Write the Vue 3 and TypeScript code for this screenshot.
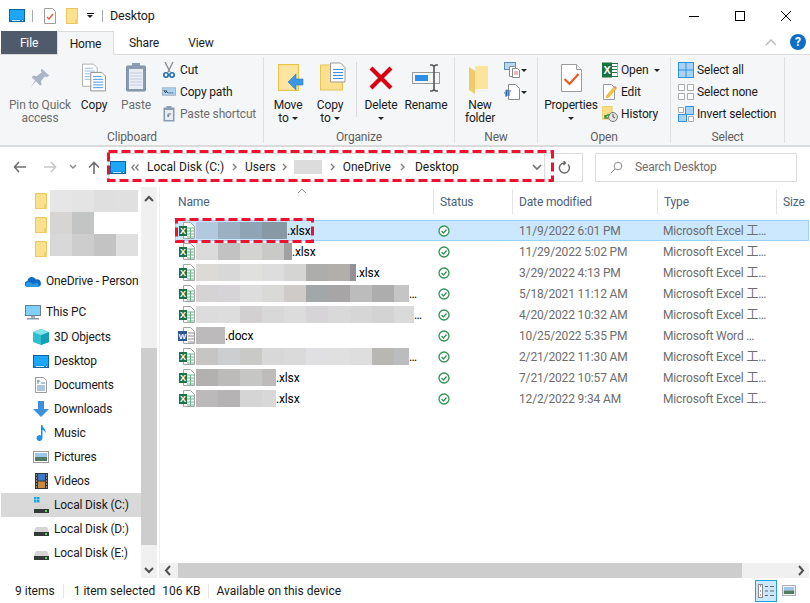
<script setup lang="ts">
type Big = { id: string; lines: string[]; w: number; dis?: boolean; caret?: boolean; caretOwn?: boolean; sz?: number };
type Block = [string, number];
type FileRow = { icon: string; blur: Block[]; ext: string; extra?: string; date: string; type: string; sel?: boolean };

const b = (cs: string[], last?: number): Block[] =>
  cs.map((c, i) => [c, i === cs.length - 1 && last ? last : 22] as Block);

const files: FileRow[] = [
  { icon: 'excel', sel: true, blur: b(['#b1c8de', '#9bb1c3', '#8fa5b5', '#8899a6'], 25), ext: '.xlsx', date: '11/9/2022 6:01 PM', type: 'Microsoft Excel 工…' },
  { icon: 'excel', blur: b(['#dcdbdb', '#c3c2c2', '#d3d3d2', '#c9cac8', '#a1a0a3'], 8), ext: '.xlsx', date: '11/29/2022 5:02 PM', type: 'Microsoft Excel 工…' },
  { icon: 'excel', blur: b(['#dbdad7', '#d9d8d8', '#e0e0df', '#dedddd', '#d5d6d4', '#adadac', '#b1aeab', '#92919a'], 6), ext: '.xlsx', date: '3/29/2022 4:13 PM', type: 'Microsoft Excel 工…' },
  { icon: 'excel', blur: b(['#d5d3d4', '#d6d4d6', '#dddddd', '#d9d9d8', '#cecbc9', '#a4a7a8', '#a8a5a6', '#bcbcbc', '#adadad', '#c5c5c5'], 15), ext: '…', date: '5/18/2021 11:12 AM', type: 'Microsoft Excel 工…' },
  { icon: 'excel', blur: b(['#dddcdc', '#dddddd', '#d2d0d0', '#d9d8d8', '#dcdcdc', '#d6d4d6', '#d9d9da', '#d6d6d6', '#d4d3d3', '#dadada'], 20), ext: '…', date: '4/20/2022 10:32 AM', type: 'Microsoft Excel 工…' },
  { icon: 'word', blur: b(['#bcbaba'], 29), ext: '.docx', date: '10/25/2022 5:35 PM', type: 'Microsoft Word …' },
  { icon: 'excel', blur: b(['#c6c5c3', '#ccced0', '#c9c9c8', '#d8d8d8', '#dadada', '#e0e0e2', '#e0e0e0', '#dedede', '#b9b7b4', '#babcbd'], 15), ext: '…', date: '2/21/2022 11:30 AM', type: 'Microsoft Excel 工…' },
  { icon: 'excel', blur: b(['#b3b1af', '#bcbbba', '#c6c6c5', '#bdbcbb'], 14), ext: '.xlsx', date: '7/21/2022 10:57 AM', type: 'Microsoft Excel 工…' },
  { icon: 'excel', blur: b(['#bbb9b9', '#b5b3b3', '#d6d5d6', '#d9d8d9'], 14), ext: '.xlsx', date: '12/2/2022 9:34 AM', type: 'Microsoft Excel 工…' },
];

const navBlur: string[][] = [
  ['#e6e6e6', '#e4e4e4', '#dfdfdf', '#e0e0e0'],
  ['#d6d5d4', '#c3c4c4', '#ffffff', '#ffffff'],
  ['#d9d8d8', '#cdcdcd', '#c4c3c3', '#dfdfdf'],
];

const pc = [
  { icon: 'cube', label: '3D Objects' },
  { icon: 'monitor', label: 'Desktop' },
  { icon: 'docs', label: 'Documents' },
  { icon: 'down', label: 'Downloads' },
  { icon: 'music', label: 'Music' },
  { icon: 'pics', label: 'Pictures' },
  { icon: 'video', label: 'Videos' },
  { icon: 'diskc', label: 'Local Disk (C:)', sel: true },
  { icon: 'disk', label: 'Local Disk (D:)' },
  { icon: 'disk', label: 'Local Disk (E:)' },
];

const clip: Big[] = [
  { id: 'pin', lines: ['Pin to Quick', 'access'], w: 78, dis: true },
  { id: 'copy', lines: ['Copy'], w: 30 },
  { id: 'paste', lines: ['Paste'], w: 54, dis: true },
];
const org: Big[] = [
  { id: 'moveto', lines: ['Move', 'to'], w: 42, caret: true },
  { id: 'copyto', lines: ['Copy', 'to'], w: 42, caret: true },
];
const org2: Big[] = [
  { id: 'del', lines: ['Delete'], w: 46, caretOwn: true },
  { id: 'rename', lines: ['Rename'], w: 44 },
];
</script>

<template>
  <div class="win">
    <svg class="defs" width="0" height="0" aria-hidden="true">
      <defs>
        <symbol id="monitor" viewBox="0 0 16 13">
          <rect x=".5" y=".5" width="15" height="12" fill="#0f9af0" stroke="#0b63a8" />
          <rect x="1" y="1" width="14" height="9" fill="#1ea7fa" />
          <rect x="3" y="11" width="8" height="1" fill="#cfeaff" />
          <rect x="13" y="11" width="1" height="1" fill="#fff" />
        </symbol>
        <symbol id="tick" viewBox="0 0 12 16">
          <path d="M.5.5h8l3 3v12H.5z" fill="#fff" stroke="#9c9c9c" />
          <path d="M3 9l2 2 4-5" fill="none" stroke="#e8592b" stroke-width="1.4" />
        </symbol>
        <symbol id="folder" viewBox="0 0 12 16">
          <rect x=".5" y=".5" width="11" height="15" fill="#fbe08e" stroke="#e8c661" />
          <rect x="9" y="11" width="3" height="5" fill="#f0cf6f" />
        </symbol>
        <symbol id="pin" viewBox="0 0 24 24">
          <path d="M14 1l9 8-3 2-2-1-5 6 1 4-2 1-5-5-6 7 5-8-4-4 2-2 4 1 6-5-1-2z" fill="#a9b4c6" />
        </symbol>
        <symbol id="copy" viewBox="0 0 26 30">
          <path d="M.5.5h12l4 4v20H.5z" fill="#fff" stroke="#a8a8a8" />
          <path d="M3 5h9M3 8h11M3 11h11M3 14h11M3 17h11" stroke="#8db8ea" />
          <path d="M9.500 9.500h12l4 4v16h-16z" fill="#fff" stroke="#8a8a8a" />
          <path d="M12 14h9M12 17h11M12 20h11M12 23h11M12 26h11" stroke="#3f8de6" />
        </symbol>
        <symbol id="paste" viewBox="0 0 20 29">
          <rect x=".5" y="3" width="19" height="25" rx="1" fill="#8a9bb0" stroke="#7d8da2" />
          <rect x="3" y="6" width="14" height="20" fill="#e9edf5" />
          <path d="M4 10h12M4 13h12M4 16h12M4 19h12M4 22h12" stroke="#c5cee0" />
          <rect x="6" y="0" width="8" height="5" fill="#8d9db2" />
        </symbol>
        <symbol id="cut" viewBox="0 0 12 16">
          <path d="M2 0l5 10M10 0L5 10" stroke="#8d9092" stroke-width="1.4" fill="none" />
          <circle cx="3" cy="13" r="2.2" fill="none" stroke="#1f6fb6" stroke-width="1.6" />
          <circle cx="9" cy="13" r="2.2" fill="none" stroke="#1f6fb6" stroke-width="1.6" />
        </symbol>
        <symbol id="cpath" viewBox="0 0 15 10">
          <rect x=".5" y=".5" width="14" height="8" fill="#a9d3f2" stroke="#a6b2bd" />
          <path d="M2 3l2 3M4 3l2 3M7 6h1M9 6h1M11 6h1" stroke="#223" />
        </symbol>
        <symbol id="pshort" viewBox="0 0 12 16">
          <rect x=".5" y="1.500" width="11" height="14" fill="#8a9bb0" />
          <rect x="2" y="4" width="8" height="10" fill="#e7ebf2" />
          <rect x="3.500" y="0" width="5" height="3" fill="#8d9db2" />
          <path d="M5 11V8h3M6 9l-1 2" stroke="#6b7b8f" fill="none" />
        </symbol>
        <symbol id="moveto" viewBox="0 0 26 28">
          <rect x=".5" y=".5" width="20" height="26" fill="#fce08e" stroke="#e8c44f" />
          <rect x="2.500" y="2" width="16" height="23" fill="#fce59f" />
          <path d="M10 20l8-8v5h7v6h-7v5z" transform="translate(0 -2)" fill="#3b97e6" stroke="#2b78bd" stroke-width=".6" />
        </symbol>
        <symbol id="copyto" viewBox="0 0 26 29">
          <rect x=".5" y="2.500" width="22" height="25" fill="#fce08e" stroke="#e8c44f" />
          <path d="M10.500.5h10l4.500 4.500v14.500H10.500z" fill="#fff" stroke="#9b9b9b" />
          <path d="M13 7h10M13 10h10M13 13h10M13 16h10" stroke="#3f8de6" />
        </symbol>
        <symbol id="del" viewBox="0 0 26 26">
          <path d="M3 3l20 20M23 3L3 23" stroke="#d90012" stroke-width="4.200" />
        </symbol>
        <symbol id="rename" viewBox="0 0 28 28">
          <rect x=".5" y="8.500" width="27" height="11" fill="#f5f6f7" stroke="#9a9a9a" />
          <rect x="3" y="11" width="13" height="6" fill="#2e8fe6" />
          <path d="M18 1h2l2 1 2-1h2M22 2v24M18 27h2l2-1 2 1h2" stroke="#555" stroke-width="1.600" fill="none" />
        </symbol>
        <symbol id="newf" viewBox="0 0 19 28">
          <rect x="6" y="0" width="13" height="23" fill="#fde49b" />
          <path d="M0 1l6 4v23l-6-4z" fill="#f0c96b" />
        </symbol>
        <symbol id="newitem" viewBox="0 0 16 16">
          <rect x=".5" y=".5" width="11" height="7" fill="#b9d7f0" stroke="#5c8db4" />
          <path d="M5.500 4.500h5l2 2v8h-7z" fill="#fff" stroke="#888" />
          <path d="M8.500 6.500h5l2 2v7h-7z" fill="#fff" stroke="#888" />
          <path d="M10 10h4M10 12h4" stroke="#c8747c" />
        </symbol>
        <symbol id="easy" viewBox="0 0 16 16">
          <path d="M4.500.5h7l4 4v11h-11z" fill="#fff" stroke="#888" />
          <path d="M1 7h6M0 9h6M1 11h5" stroke="#1c5fa8" />
          <path d="M3 5.500L2 13" stroke="#1c5fa8" />
        </symbol>
        <symbol id="props" viewBox="0 0 21 28">
          <path d="M.5.5h15l5 5v22H.5z" fill="#fff" stroke="#9c9c9c" />
          <path d="M15.500.5v5h5" fill="#eee" stroke="#9c9c9c" />
          <path d="M3.500 15l5 5 9-10" fill="none" stroke="#f0591e" stroke-width="2.200" />
        </symbol>
        <symbol id="xl" viewBox="0 0 16 15">
          <rect x="6" y="1" width="10" height="13" fill="#fff" stroke="#217346" />
          <path d="M9 4h6M9 7h6M9 10h6" stroke="#217346" />
          <rect x="0" y="0" width="10" height="15" fill="#1b7240" />
          <text x="5" y="11.500" font-size="11" font-weight="700" fill="#fff" text-anchor="middle" font-family="Liberation Sans">X</text>
        </symbol>
        <symbol id="edit" viewBox="0 0 14 16">
          <path d="M.5.5h8l3 3v12H.5z" fill="#fff" stroke="#9c9c9c" />
          <path d="M3 14l1-3 7-8 2 2-7 8z" fill="#f3c13e" stroke="#d99f1f" stroke-width=".5" />
          <path d="M11 3l1-1 2 2-1 1z" fill="#e57b7b" />
        </symbol>
        <symbol id="hist" viewBox="0 0 16 16">
          <rect x="0" y="0" width="10" height="13" fill="#fbdd85" stroke="#e8c661" />
          <circle cx="11" cy="11" r="4.500" fill="#e5e5e5" stroke="#777" />
          <path d="M11 8v3l2 1" stroke="#555" fill="none" />
          <path d="M3 12a4 4 0 0 1 5-3M3 9v3h3" fill="none" stroke="#2f9a36" stroke-width="1.500" />
        </symbol>
        <symbol id="selall" viewBox="0 0 16 16">
          <rect x=".5" y=".5" width="15" height="15" fill="#a9d3f5" stroke="#2e93e6" />
          <path d="M8 0v16M0 8h16" stroke="#2e93e6" />
        </symbol>
        <symbol id="selnone" viewBox="0 0 16 16">
          <path d="M.5.5h6v6h-6zM9.500.5h6v6h-6zM.5 9.500h6v6h-6zM9.500 9.500h6v6h-6z" fill="#fff" stroke="#ababab" />
        </symbol>
        <symbol id="selinv" viewBox="0 0 16 16">
          <path d="M.5 1.500h5v5h-5zM10.500 10.500h5v5h-5z" fill="#fff" stroke="#ababab" />
          <path d="M7.500.5h8v8h-8zM.5 8.500h8v7h-8z" fill="#a9d3f5" stroke="#2e93e6" />
        </symbol>
        <symbol id="excel" viewBox="0 0 17 17">
          <path d="M5.500.5h7l4 4v12h-11z" fill="#fff" stroke="#a5a5a5" />
          <path d="M9 6h7M9 9h7M9 12h7M9 15h7M12.500 6v10" stroke="#69b58a" />
          <rect x="1" y="4" width="8" height="10" fill="#1f7145" />
          <text x="5" y="12" font-size="9" font-weight="700" fill="#fff" text-anchor="middle" font-family="Liberation Sans">X</text>
        </symbol>
        <symbol id="word" viewBox="0 0 17 17">
          <path d="M5.500.5h7l4 4v12h-11z" fill="#fff" stroke="#a5a5a5" />
          <path d="M10 6h6M10 9h6M10 12h6M10 15h6" stroke="#8a8a8a" />
          <rect x="0" y="4" width="9" height="10" fill="#2b579a" />
          <text x="4.500" y="12" font-size="8" font-weight="700" fill="#fff" text-anchor="middle" font-family="Liberation Sans">W</text>
        </symbol>
        <symbol id="check" viewBox="0 0 12 12">
          <circle cx="6" cy="6" r="5" fill="#fff" stroke="#2f9152" stroke-width="1.300" />
          <path d="M3.500 6l2 2 3-3.500" fill="none" stroke="#2f9152" stroke-width="1.200" />
        </symbol>
        <symbol id="onedrive" viewBox="0 0 16 11">
          <path d="M3 11a3 3 0 0 1-.5-6A4.500 4.500 0 0 1 11 3.500 3.500 3.500 0 0 1 13 11z" fill="#0f6cc4" />
          <path d="M3 11a2.500 2.500 0 0 1 1-5l4 2 4-1a2.500 2.500 0 0 1 1 4z" fill="#2a9bea" />
        </symbol>
        <symbol id="pc" viewBox="0 0 16 15">
          <rect x=".5" y=".5" width="15" height="10" fill="#7fd0fb" stroke="#6d7f8f" />
          <rect x="6" y="11" width="4" height="2" fill="#aab" />
          <rect x="2" y="13" width="12" height="1.500" fill="#8a9aa8" />
        </symbol>
        <symbol id="cube" viewBox="0 0 16 16">
          <path d="M8 0l8 3v10l-8 3-8-3V3z" fill="#2fc0cf" />
          <path d="M8 6l8-3v10l-8 3z" fill="#15a0b8" />
          <path d="M8 0l8 3-8 3-8-3z" fill="#86e2ea" />
        </symbol>
        <symbol id="docs" viewBox="0 0 12 16">
          <path d="M.5.5h8l3 3v12H.5z" fill="#fff" stroke="#9c9c9c" />
          <path d="M2 4l3 0M3 3v4M2 9h8M2 11h8M2 13h8M6 6h4" stroke="#5a88b8" />
        </symbol>
        <symbol id="down" viewBox="0 0 16 16">
          <path d="M5 0h6v8h5l-8 8-8-8h5z" fill="#3a8fdf" />
        </symbol>
        <symbol id="music" viewBox="0 0 11 16">
          <path d="M5 0h1.500c0 3 4 4 3 8-.5-2-2-3-3-3v8a3 3 0 1 1-1.500-2.600z" fill="#1d92e6" />
        </symbol>
        <symbol id="pics" viewBox="0 0 16 12">
          <rect x=".5" y=".5" width="15" height="11" fill="#fff" stroke="#9c9c9c" />
          <rect x="2" y="2" width="12" height="4" fill="#9dc7ea" />
          <rect x="2" y="6" width="12" height="4" fill="#4f7a63" />
        </symbol>
        <symbol id="video" viewBox="0 0 13 16">
          <rect width="13" height="16" fill="#34343a" />
          <rect x="3" y="1" width="7" height="6.500" fill="#3f78c8" />
          <rect x="3" y="8.500" width="7" height="6.500" fill="#c88a3c" />
          <path d="M1 2h1M1 5h1M1 8h1M1 11h1M1 14h1M11 2h1M11 5h1M11 8h1M11 11h1M11 14h1" stroke="#ddd" />
        </symbol>
        <symbol id="disk" viewBox="0 0 15 9">
          <path d="M2 0h11l2 4v5H0V4z" fill="#d5d5d5" />
          <rect y="5" width="15" height="4" fill="#35393b" />
          <rect x="11" y="6" width="2" height="2" fill="#5ad35a" />
        </symbol>
        <symbol id="diskc" viewBox="0 0 15 16">
          <path d="M0 0h2.500v2.500H0zM3 0h2.500v2.500H3zM0 3h2.500v2.500H0zM3 3h2.500v2.500H3z" fill="#11a8e8" />
          <path d="M2 7h11l2 4v5H0v-5z" fill="#d5d5d5" />
          <rect y="12" width="15" height="4" fill="#35393b" />
          <rect x="11" y="13" width="2" height="2" fill="#5ad35a" />
        </symbol>
        <symbol id="viewlist" viewBox="0 0 16 14">
          <rect x=".5" y=".5" width="4" height="13" fill="#fff" stroke="#8a8a8a" />
          <path d="M2 2h1M2 7h1" stroke="#444" />
          <path d="M2 11h1" stroke="#c33" />
          <path d="M7 2.500h3M12 2.500h4M7 7h3M12 7h4M7 11.500h3M12 11.500h4" stroke="#666" />
        </symbol>
        <symbol id="crumb" viewBox="0 0 5 8">
          <path d="M1 1l3 3-3 3" fill="none" stroke="#808080" stroke-width="1.400" />
        </symbol>
      </defs>
    </svg>

    <header class="title">
      <svg class="ic16 t-mon"><use href="#monitor" /></svg>
      <i class="tsep"></i>
      <svg class="ic-doc"><use href="#tick" /></svg>
      <svg class="ic-doc t-fold"><use href="#folder" /></svg>
      <span class="qat"><i class="bar"></i><i class="caret"></i></span>
      <i class="tsep t2"></i>
      <span class="ttext">Desktop</span>
      <div class="winbtns">
        <svg width="46" height="30" viewBox="0 0 46 30"><path d="M18 15.500h10" stroke="#000" /></svg>
        <svg width="46" height="30" viewBox="0 0 46 30"><rect x="18.500" y="10.500" width="9" height="9" fill="none" stroke="#000" /></svg>
        <svg width="46" height="30" viewBox="0 0 46 30"><path d="M18 10l10 10M28 10L18 20" stroke="#000" fill="none" /></svg>
      </div>
    </header>

    <nav class="tabs">
      <span class="tab file">File</span>
      <span class="tab home">Home</span>
      <span class="tab share">Share</span>
      <span class="tab view">View</span>
      <div class="tabs-right">
        <svg width="12" height="8" viewBox="0 0 12 8"><path d="M1 7l5-5 5 5" fill="none" stroke="#b5b8bc" stroke-width="1.300" /></svg>
        <span class="help">?</span>
      </div>
    </nav>

    <section class="ribbon">
      <div class="group g-clip">
        <div class="gbody">
          <div v-for="x in clip" :key="x.id" class="big" :class="{ dis: x.dis }" :style="{ width: x.w + 'px' }">
            <span class="bigicon"><svg :class="'s-' + x.id"><use :href="'#' + x.id" /></svg></span>
            <span v-for="l in x.lines" :key="l" class="bl">{{ l }}</span>
          </div>
          <div class="smalls clipcol">
            <div class="sm"><svg class="smi"><use href="#cut" /></svg><span>Cut</span></div>
            <div class="sm"><svg class="smi"><use href="#cpath" /></svg><span>Copy path</span></div>
            <div class="sm dis"><svg class="smi"><use href="#pshort" /></svg><span>Paste shortcut</span></div>
          </div>
        </div>
        <div class="glabel">Clipboard</div>
      </div>

      <div class="group g-org">
        <div class="gbody">
          <div v-for="x in org" :key="x.id" class="big" :style="{ width: x.w + 'px' }">
            <span class="bigicon"><svg :class="'s-' + x.id"><use :href="'#' + x.id" /></svg></span>
            <span class="bl">{{ x.lines[0] }}</span>
            <span class="bl">{{ x.lines[1] }}<i class="caret inl"></i></span>
          </div>
          <i class="gsep"></i>
          <div v-for="x in org2" :key="x.id" class="big" :style="{ width: x.w + 'px' }">
            <span class="bigicon"><svg :class="'s-' + x.id"><use :href="'#' + x.id" /></svg></span>
            <span class="bl">{{ x.lines[0] }}</span>
            <span v-if="x.caretOwn" class="bl"><i class="caret"></i></span>
          </div>
        </div>
        <div class="glabel">Organize</div>
      </div>

      <div class="group g-new">
        <div class="gbody">
          <div class="big w46">
            <span class="bigicon"><svg class="s-newf"><use href="#newf" /></svg></span>
            <span class="bl">New</span>
            <span class="bl">folder</span>
          </div>
          <div class="smalls newcol">
            <div class="sm"><svg class="smi"><use href="#newitem" /></svg><i class="caret"></i></div>
            <div class="sm"><svg class="smi"><use href="#easy" /></svg><i class="caret"></i></div>
          </div>
        </div>
        <div class="glabel">New</div>
      </div>

      <div class="group g-open">
        <div class="gbody">
          <div class="big w62">
            <span class="bigicon"><svg class="s-props"><use href="#props" /></svg></span>
            <span class="bl">Properties</span>
            <span class="bl"><i class="caret"></i></span>
          </div>
          <div class="smalls">
            <div class="sm"><svg class="smi"><use href="#xl" /></svg><span>Open</span><i class="caret op"></i></div>
            <div class="sm"><svg class="smi"><use href="#edit" /></svg><span>Edit</span></div>
            <div class="sm"><svg class="smi"><use href="#hist" /></svg><span>History</span></div>
          </div>
        </div>
        <div class="glabel">Open</div>
      </div>

      <div class="group g-sel">
        <div class="gbody">
          <div class="smalls">
            <div class="sm"><svg class="smi"><use href="#selall" /></svg><span>Select all</span></div>
            <div class="sm"><svg class="smi"><use href="#selnone" /></svg><span>Select none</span></div>
            <div class="sm"><svg class="smi"><use href="#selinv" /></svg><span>Invert selection</span></div>
          </div>
        </div>
        <div class="glabel">Select</div>
      </div>
    </section>

    <section class="addr">
      <div class="navbtns">
        <svg width="14" height="12" viewBox="0 0 14 12"><path d="M13 6H2M6 1L1.500 6 6 11" fill="none" stroke="#6f6f6f" stroke-width="1.600" /></svg>
        <svg class="fw" width="14" height="12" viewBox="0 0 14 12"><path d="M1 6h11M8 1l4.500 5L8 11" fill="none" stroke="#c8c8c8" stroke-width="1.600" /></svg>
        <svg class="dn" width="8" height="6" viewBox="0 0 8 6"><path d="M1 1l3 3 3-3" fill="none" stroke="#8a8a8a" stroke-width="1.400" /></svg>
        <svg class="upb" width="12" height="13" viewBox="0 0 12 13"><path d="M6 13V2M1 6.500L6 1.500l5 5" fill="none" stroke="#6f6f6f" stroke-width="1.600" /></svg>
      </div>
      <div class="pathbox">
        <svg class="p-mon"><use href="#monitor" /></svg>
        <svg class="dbl" width="8" height="7" viewBox="0 0 8 7"><path d="M3.500.5L.8 3.500l2.700 3M7.500.5L4.800 3.500l2.700 3" fill="none" stroke="#808080" stroke-width="1.300" /></svg>
        <span>Local Disk (C:)</span>
        <span class="sep"><svg width="5" height="8"><use href="#crumb" /></svg></span>
        <span>Users</span>
        <span class="sep tight"><svg width="5" height="8"><use href="#crumb" /></svg></span>
        <i class="pblur"></i>
        <span class="sep"><svg width="5" height="8"><use href="#crumb" /></svg></span>
        <span>OneDrive</span>
        <span class="sep wide"><svg width="5" height="8"><use href="#crumb" /></svg></span>
        <span>Desktop</span>
        <svg class="chev" width="10" height="7" viewBox="0 0 10 7"><path d="M1 1l4 4 4-4" fill="none" stroke="#6f6f6f" stroke-width="1.600" /></svg>
      </div>
      <div class="refresh">
        <svg width="12" height="13" viewBox="0 0 12 13"><path d="M10 3.500A5 5 0 1 1 6 2h1M5.500 0l2 2-2 2" fill="none" stroke="#666" stroke-width="1.400" /></svg>
      </div>
      <div class="search">
        <svg width="13" height="13" viewBox="0 0 13 13"><circle cx="8" cy="5" r="3.800" fill="none" stroke="#8a8a8a" /><path d="M5 8l-4 4" stroke="#8a8a8a" /></svg>
        <span>Search Desktop</span>
      </div>
    </section>

    <main class="main">
      <aside class="navpane">
        <div class="quick">
          <div class="qf"><svg v-for="n in 3" :key="n" class="qfi"><use href="#folder" /></svg></div>
          <div class="qb">
            <div v-for="(r, i) in navBlur" :key="i" class="qbr">
              <i v-for="(c, j) in r" :key="j" :style="{ background: c }"></i>
            </div>
          </div>
        </div>
        <div class="nrow one"><svg class="ni-one"><use href="#onedrive" /></svg><span>OneDrive - Person</span></div>
        <div class="nrow one pcr"><svg class="ni-pc"><use href="#pc" /></svg><span>This PC</span></div>
        <div v-for="p in pc" :key="p.label + p.icon" class="nrow child" :class="{ sel: p.sel }">
          <span class="nslot"><svg :class="'ni-' + p.icon"><use :href="'#' + p.icon" /></svg></span>
          <span>{{ p.label }}</span>
        </div>
      </aside>
      <div class="vscroll">
        <svg width="16" height="22" viewBox="0 0 16 22"><path d="M4 14l4-4 4 4" fill="none" stroke="#505050" stroke-width="2" /></svg>
        <div class="vthumb"></div>
        <svg class="vdn" width="16" height="16" viewBox="0 0 16 16"><path d="M4 6l4 4 4-4" fill="none" stroke="#505050" stroke-width="2" /></svg>
      </div>
      <i class="split"></i>
      <div class="filepane">
        <div class="thead">
          <svg class="sort" width="10" height="6" viewBox="0 0 10 6"><path d="M1 5l4-4 4 4" fill="none" stroke="#888" /></svg>
          <span class="th c-name">Name</span>
          <span class="th c-status">Status</span>
          <span class="th c-date">Date modified</span>
          <span class="th c-type">Type</span>
          <span class="th c-size">Size</span>
        </div>
        <div class="tbody">
          <div v-for="f in files" :key="f.date" class="tr" :class="{ sel: f.sel }">
            <div class="td-name">
              <svg class="fi"><use :href="'#' + f.icon" /></svg>
              <span class="blur"><i v-for="(bl, i) in f.blur" :key="i" :style="{ background: bl[0], width: bl[1] + 'px' }"></i></span>
              <span class="ext">{{ f.ext }}</span>
            </div>
            <div class="td-status"><svg class="ck"><use href="#check" /></svg></div>
            <div class="td-date">{{ f.date }}</div>
            <div class="td-type">{{ f.type }}</div>
          </div>
        </div>
        <div class="hscroll">
          <svg width="18" height="15" viewBox="0 0 18 15"><path d="M10 3L6 7.500 10 12" fill="none" stroke="#505050" stroke-width="2" /></svg>
          <div class="hthumb"></div>
          <svg class="hr" width="16" height="15" viewBox="0 0 16 15"><path d="M6 3l4 4.500L6 12" fill="none" stroke="#505050" stroke-width="2" /></svg>
        </div>
      </div>
    </main>

    <footer class="status">
      <span class="s1">9 items</span>
      <i class="ssep"></i>
      <span class="s2">1 item selected</span>
      <span class="s3">106 KB</span>
      <i class="ssep s4"></i>
      <span>Available on this device</span>
      <div class="views">
        <span class="vbtn on"><svg width="16" height="14"><use href="#viewlist" /></svg></span>
        <span class="vbtn"><svg width="14" height="11"><use href="#pics" /></svg></span>
      </div>
    </footer>

    <svg class="marks" width="810" height="603" viewBox="0 0 810 603" aria-hidden="true">
      <rect x="108.500" y="151.500" width="444" height="29" />
      <rect x="176.500" y="219.500" width="136" height="22" />
    </svg>
  </div>
</template>

<style>
html, body { margin: 0; padding: 0; background: #fff; }
</style>

<style scoped>
.win {
  position: relative;
  width: 810px;
  height: 603px;
  overflow: hidden;
  background: #fff;
  display: flex;
  flex-direction: column;
  font: 12px/16px Roboto, "Noto Sans CJK SC", sans-serif;
  letter-spacing: -0.15px;
  color: #1a1a1a;
}
.defs { position: absolute; }
i { display: block; font-style: normal; }
svg { display: block; flex: none; }

.title { height: 31px; display: flex; align-items: center; flex: none; }
.t-mon { width: 16px; height: 13px; margin-left: 9px; }
.tsep { width: 1px; height: 12px; background: #a8a8a8; margin: 0 11px 0 7px; }
.ic-doc { width: 12px; height: 16px; }
.t-fold { margin-left: 10px; }
.qat { display: flex; flex-direction: column; align-items: center; gap: 1px; width: 8px; margin-left: 8px; }
.bar { width: 7px; height: 1px; background: #000; }
.caret { width: 0; height: 0; border: 3.500px solid transparent; border-top-color: #222; border-bottom-width: 0; }
.t2 { margin: 0 7px 0 8px; }
.ttext { font-size: 12.500px; }
.winbtns { margin-left: auto; display: flex; margin-right: 1px; }

.tabs { height: 24px; display: flex; flex: none; position: relative; border-bottom: 1px solid #dadbdc; box-sizing: border-box; padding-left: 1px; }
.tab { display: flex; align-items: center; justify-content: center; height: 23px; }
.file { width: 56px; background: #4f5b6b; color: #fff; }
.home { width: 57px; background: #f5f6f7; border: 1px solid #dadbdc; border-bottom: 0; box-sizing: border-box; height: 24px; position: relative; z-index: 1; }
.share { width: 60px; }
.view { width: 54px; }
.tabs-right { margin-left: auto; display: flex; align-items: center; gap: 13px; margin-right: 4px; margin-top: -2px; }
.help { width: 16px; height: 16px; border-radius: 50%; background: #0a6ec8; color: #fff; font-weight: 700; font-size: 12px; line-height: 16px; text-align: center; }

.ribbon { height: 92px; flex: none; background: #f5f6f7; border-bottom: 2px solid #dadbdc; box-sizing: border-box; display: flex; padding: 2px 0 0 1px; }
.group { display: flex; flex-direction: column; border-right: 1px solid #dfe0e1; box-sizing: border-box; height: 86px; flex: none; }
.gbody { display: flex; height: 74px; padding-top: 5px; box-sizing: border-box; flex: none; }
.glabel { text-align: center; line-height: 12px; height: 12px; flex: none; color: #5f5f5f; margin-top: 0; }
.g-clip { width: 263px; }
.g-org { width: 191px; }
.g-org .gbody { padding-left: 3px; }
.g-new { width: 83px; }
.g-new .gbody { padding-left: 2px; }
.g-open { width: 133px; }
.g-open .gbody { padding-left: 2px; }
.g-sel { width: 114px; }
.g-sel .gbody { padding-left: 7px; }
.big { display: flex; flex-direction: column; align-items: center; flex: none; }
.bl { line-height: 13px; height: 13px; white-space: nowrap; display: flex; align-items: center; justify-content: center; }
.bigicon { height: 37px; display: flex; justify-content: center; align-items: flex-start; }
.dis, .dis .bl { color: #6d6d6d; }
.s-pin { width: 20px; height: 20px; margin-top: 6px; }
.s-copy { width: 24px; height: 29px; margin-top: 1px; }
.s-paste { width: 20px; height: 29px; margin-top: 1px; }
.s-moveto { width: 26px; height: 28px; margin: 2px 0 0 5px; }
.s-copyto { width: 26px; height: 30px; margin-left: 5px; }
.s-del { width: 26px; height: 26px; margin-top: 3px; }
.s-rename { width: 28px; height: 28px; margin-top: 2px; }
.s-newf { width: 19px; height: 28px; margin: 4px 3px 0 0; }
.s-props { width: 21px; height: 28px; margin-top: 2px; }
.inl { margin-left: 3px; }
.gsep { width: 1px; height: 55px; background: #dadbdc; margin: 0 1px 0 5px; flex: none; }
.w46 { width: 46px; }
.w62 { width: 62px; }
.smalls { display: flex; flex-direction: column; margin-top: -3px; }
.sm { height: 22px; display: flex; align-items: center; white-space: nowrap; }
.smi { width: 16px; height: 16px; margin-right: 3px; flex: none; }
.clipcol { margin-left: -1px; }
.clipcol .smi { width: 14px; margin-right: 4px; }
.newcol { margin-left: 1px; margin-top: -3px; }
.newcol .smi { margin-right: 1px; }
.op { margin-left: 6px; }

.addr { height: 40px; flex: none; display: flex; align-items: center; position: relative; }
.navbtns { width: 108px; display: flex; align-items: center; padding-left: 13px; box-sizing: border-box; flex: none; }
.fw { margin-left: 16px; }
.dn { margin-left: 12px; }
.upb { margin-left: 11px; }
.pathbox { width: 437px; height: 29px; border: 1px solid #dcdcdc; box-sizing: border-box; display: flex; align-items: center; flex: none; white-space: nowrap; letter-spacing: 0; }
.p-mon { width: 16px; height: 13px; margin-left: 1px; }
.dbl { margin: 0 8px 0 5px; }
.sep { width: 21px; display: flex; justify-content: center; flex: none; }
.sep.tight { width: 18px; }
.sep.wide { width: 24px; }
.pblur { width: 28px; height: 14px; background: #dcdcdc; }
.chev { margin-left: auto; margin-right: 2px; }
.refresh { width: 38px; height: 29px; border: 1px solid #dcdcdc; border-left: 0; box-sizing: border-box; display: flex; align-items: center; justify-content: center; flex: none; }
.search { width: 202px; height: 29px; margin-left: 12px; border: 1px solid #dcdcdc; box-sizing: border-box; display: flex; align-items: center; padding-left: 14px; gap: 12px; color: #6d6d6d; flex: none; }

.main { height: 391px; flex: none; display: flex; }
.navpane { width: 141px; height: 391px; overflow: hidden; flex: none; padding: 2px 0 0 1px; box-sizing: border-box; }
.quick { display: flex; height: 72px; margin-bottom: 8px; }
.qf { width: 49px; padding-left: 34px; box-sizing: border-box; flex: none; display: flex; flex-direction: column; gap: 8px; padding-top: 4px; }
.qfi { width: 12px; height: 16px; }
.qb { padding-top: 1px; }
.qbr { display: flex; height: 22px; }
.qbr i { width: 22px; height: 22px; }
.nrow { height: 24px; display: flex; align-items: center; white-space: nowrap; }
.one { padding-left: 24px; gap: 5px; }
.pcr { margin-top: 7px; margin-bottom: 1px; }
.ni-one { width: 16px; height: 11px; }
.ni-pc { width: 16px; height: 15px; }
.child { padding-left: 32px; }
.child.sel { background: #d9d9d9; }
.nslot { width: 21px; display: flex; justify-content: center; padding-right: 5px; box-sizing: border-box; flex: none; }
.ni-cube { width: 16px; height: 16px; }
.ni-monitor { width: 16px; height: 13px; }
.ni-docs { width: 12px; height: 16px; }
.ni-down { width: 16px; height: 16px; }
.ni-music { width: 11px; height: 16px; }
.ni-pics { width: 16px; height: 12px; }
.ni-video { width: 13px; height: 16px; }
.ni-disk { width: 15px; height: 9px; margin-top: 4px; }
.ni-diskc { width: 15px; height: 16px; }

.vscroll { width: 16px; flex: none; background: #f0f0f0; display: flex; flex-direction: column; }
.vthumb { height: 197px; background: #cdcdcd; margin-top: 139px; flex: none; }
.vdn { margin-top: auto; }
.split { width: 3px; flex: none; background: #fff; border-right: 1px solid #eeeeee; box-sizing: border-box; }
.filepane { flex: 1; display: flex; flex-direction: column; min-width: 0; }
.thead { height: 33px; flex: none; position: relative; display: flex; padding: 2px 0 6px 0; box-sizing: border-box; color: #4c607a; }
.sort { position: absolute; left: 137px; top: 1px; }
.th { height: 25px; display: flex; align-items: center; border-right: 1px solid #e5e5e5; box-sizing: border-box; padding-left: 6px; flex: none; }
.c-name { width: 274px; padding-left: 18px; }
.c-status { width: 79px; }
.c-date { width: 145px; }
.c-type { width: 119px; }
.c-size { border: 0; }
.tbody { flex: 1; }
.tr { height: 21px; margin-left: 15px; margin-right: 1px; display: flex; align-items: center; box-sizing: border-box; color: #6d6d6d; }
.tr.sel { background: #cce8ff; box-shadow: inset 0 0 0 1px #99d1ff; }
.td-name { width: 258px; display: flex; align-items: center; padding-left: 3px; box-sizing: border-box; flex: none; color: #000; }
.fi { width: 17px; height: 17px; }
.blur { display: flex; height: 17px; margin-left: 1px; }
.blur i { height: 17px; flex: none; }
.ext { white-space: nowrap; }
.td-status { width: 79px; padding-left: 5px; box-sizing: border-box; flex: none; }
.ck { width: 12px; height: 12px; }
.td-date { width: 145px; padding-left: 7px; box-sizing: border-box; flex: none; white-space: nowrap; }
.td-type { padding-left: 6px; white-space: nowrap; }
.hscroll { height: 15px; flex: none; display: flex; background: #f0f0f0; margin-right: 1px; }
.hthumb { width: 564px; background: #cdcdcd; flex: none; }
.hr { margin-left: auto; }

.status { height: 25px; flex: none; display: flex; align-items: center; padding-left: 15px; white-space: nowrap; letter-spacing: 0; }
.ssep { width: 1px; height: 14px; background: #e5e5e5; margin: 0 10px 0 8px; }
.s3 { margin-left: 7px; }
.s4 { margin: 0 7px 0 8px; }
.views { margin-left: auto; display: flex; align-items: center; margin-right: 10px; gap: 1px; }
.vbtn { width: 22px; height: 22px; display: flex; align-items: center; justify-content: center; box-sizing: border-box; border: 1px solid transparent; }
.vbtn.on { background: #cce8ff; border-color: #26a0da; }

.marks { position: absolute; left: 0; top: 0; pointer-events: none; }
.marks rect { fill: none; stroke: #ef1230; stroke-width: 3; stroke-dasharray: 9 4; }
</style>
